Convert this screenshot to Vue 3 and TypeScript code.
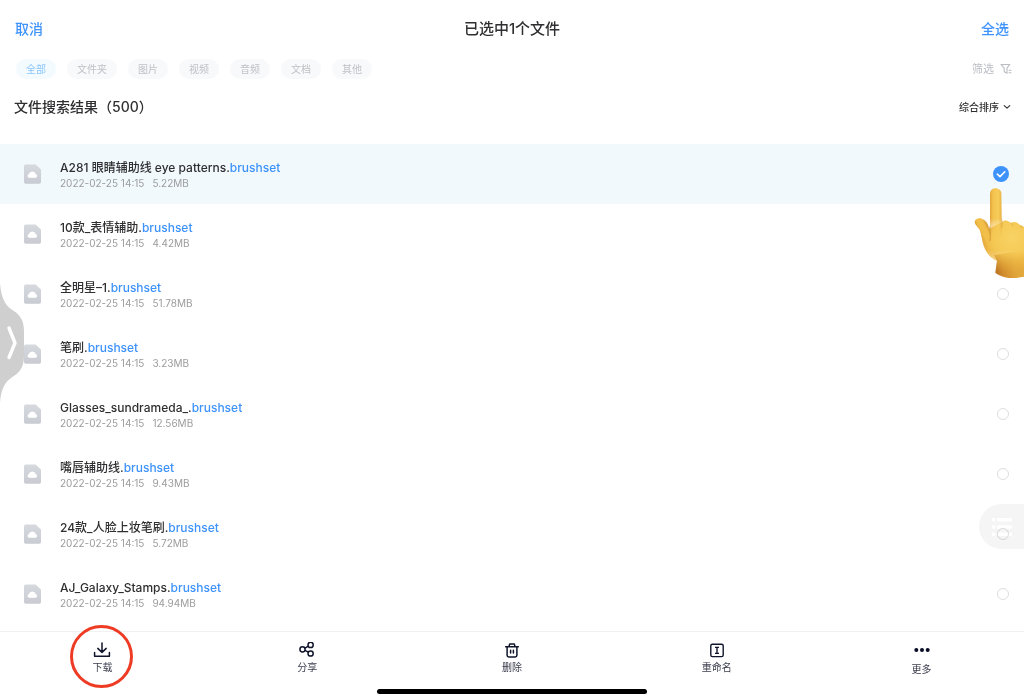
<script setup lang="ts">
import { ref } from 'vue'

interface FileItem {
  id: number
  name: string
  time: string
  size: string
  selected: boolean
}

const filters = ['全部', '文件夹', '图片', '视频', '音频', '文档', '其他']
const activeFilter = ref('全部')

const time = '2022-02-25 14:15'
const files = ref<FileItem[]>([
  { id: 1, name: 'A281 眼睛辅助线 eye patterns.', time, size: '5.22MB', selected: true },
  { id: 2, name: '10款_表情辅助.', time, size: '4.42MB', selected: false },
  { id: 3, name: '全明星–1.', time, size: '51.78MB', selected: false },
  { id: 4, name: '笔刷.', time, size: '3.23MB', selected: false },
  { id: 5, name: 'Glasses_sundrameda_.', time, size: '12.56MB', selected: false },
  { id: 6, name: '嘴唇辅助线.', time, size: '9.43MB', selected: false },
  { id: 7, name: '24款_人脸上妆笔刷.', time, size: '5.72MB', selected: false },
  { id: 8, name: 'AJ_Galaxy_Stamps.', time, size: '94.94MB', selected: false },
])
</script>

<template>
  <div class="page">
    <header class="topbar">
      <button type="button" class="link start">取消</button>
      <h1>已选中1个文件</h1>
      <button type="button" class="link end">全选</button>
    </header>

    <nav class="filters">
      <button
        v-for="f in filters"
        :key="f"
        type="button"
        class="chip"
        :class="{ active: f === activeFilter }"
        @click="activeFilter = f"
      >{{ f }}</button>
      <button type="button" class="screen">
        筛选
        <svg width="12" height="12" viewBox="0 0 12 12" fill="none" stroke="currentColor" stroke-width="1.1" stroke-linejoin="round" stroke-linecap="round">
          <path d="M1 1.5H9.8L7 5.2V10.2L4.2 8.8V5.2Z" />
          <path d="M9 7.2H11M9 9.8H11" />
        </svg>
      </button>
    </nav>

    <div class="heading">
      <h2>文件搜索结果（500）</h2>
      <button type="button" class="sort">
        综合排序
        <svg width="8" height="6" viewBox="0 0 8 6" fill="none" stroke="currentColor" stroke-width="1.1" stroke-linecap="round" stroke-linejoin="round">
          <path d="M1.2 1.6L4 4.2L6.8 1.6" />
        </svg>
      </button>
    </div>

    <ul class="list">
      <li v-for="f in files" :key="f.id">
        <label class="row" :class="{ selected: f.selected }">
          <svg class="file" width="17" height="20" viewBox="0 0 17 20">
            <defs>
              <linearGradient :id="'file-' + f.id" x1="0" y1="0" x2="0" y2="1">
                <stop offset="0" stop-color="#d6d9de" />
                <stop offset="1" stop-color="#c8cbd2" />
              </linearGradient>
            </defs>
            <path d="M2 .5H11.6L17 5.6V18A1.7 1.7 0 0 1 15.3 19.7H1.7A1.7 1.7 0 0 1 0 18V2.3A1.8 1.8 0 0 1 1.8 .5Z" :fill="'url(#file-' + f.id + ')'" />
            <path d="M5.2 13.8A1.9 1.9 0 0 1 4.9 10.1A3.5 3.5 0 0 1 11.7 10.1A1.9 1.9 0 0 1 11.6 13.8Z" fill="#fff" />
          </svg>
          <span class="info">
            <span class="name">{{ f.name }}<em>brushset</em></span>
            <span class="meta"><span>{{ f.time }}</span><span>{{ f.size }}</span></span>
          </span>
          <span class="pick">
            <input v-model="f.selected" type="checkbox" />
            <svg v-if="f.selected" class="tick" width="16" height="16" viewBox="0 0 16 16" fill="none" stroke="#fff" stroke-width="1.6" stroke-linecap="round" stroke-linejoin="round">
              <path d="M4.3 8.2L7 10.6L11.8 5.8" />
            </svg>
          </span>
        </label>
      </li>
    </ul>

    <footer class="actions">
      <button type="button">
        <svg width="18" height="16" viewBox="0 0 18 16" fill="none" stroke="#10142b" stroke-width="1.5" stroke-linecap="round" stroke-linejoin="round">
          <path d="M9 .9V10.2M4.8 6.4L9 10.4L13.2 6.4" />
          <path d="M1.6 10.4V14.3H16.4V10.4" />
        </svg>
        下载
        <i class="ring"></i>
      </button>
      <button type="button">
        <svg width="16" height="16" viewBox="0 0 16 16" fill="none" stroke="#10142b" stroke-width="1.5">
          <circle cx="3.5" cy="7.3" r="2.6" />
          <circle cx="11.6" cy="2.9" r="2.6" />
          <circle cx="11.6" cy="11.5" r="2.6" />
          <path d="M6 6.2L9.3 4.2M6 8.3L9.3 10.2" />
        </svg>
        分享
      </button>
      <button type="button">
        <svg width="16" height="16" viewBox="0 0 16 16" fill="none" stroke="#10142b" stroke-width="1.5" stroke-linecap="round" stroke-linejoin="round">
          <path d="M1.7 4.7H14.3M5 4.4L5.7 2H10.3L11 4.4" />
          <path d="M3.1 4.8V13.2A1.7 1.7 0 0 0 4.8 14.9H11.2A1.7 1.7 0 0 0 12.9 13.2V4.8" />
          <path d="M6.6 8.3V11M9.4 8.3V11" />
        </svg>
        删除
      </button>
      <button type="button">
        <svg width="16" height="16" viewBox="0 0 16 16" fill="none" stroke="#10142b" stroke-width="1.4" stroke-linejoin="round">
          <rect x="1.8" y="2.2" width="12.4" height="12.4" rx="1.6" />
          <path d="M6 5.4H10M6 11.4H10M8 5.4V11.4" />
        </svg>
        重命名
      </button>
      <button type="button" class="more">
        <svg width="16" height="16" viewBox="0 0 16 16" fill="#080c24">
          <circle cx="2.3" cy="8" r="2" />
          <circle cx="8" cy="8" r="2" />
          <circle cx="13.7" cy="8" r="2" />
        </svg>
        更多
      </button>
      <i class="home"></i>
    </footer>

    <button type="button" class="drawer" aria-label="展开">
      <svg width="24" height="120" viewBox="0 0 24 120">
        <path d="M0 0C1 14 5 22 11 26C19 31 24 36 24 48V73C24 85 19 90 11 95C5 99 1 106 0 120Z" fill="#cfcfcf" />
        <path d="M9 45L15 60L9 74.5" fill="none" stroke="#fff" stroke-width="3.4" stroke-linecap="round" stroke-linejoin="round" />
      </svg>
    </button>

    <button type="button" class="float" aria-label="列表">
      <svg width="20" height="20" viewBox="0 0 20 20" fill="#fff">
        <rect x="0" y="1" width="3.4" height="3.4" rx="1" /><rect x="5" y="1" width="15" height="3.4" rx="1" />
        <rect x="0" y="8.3" width="3.4" height="3.4" rx="1" /><rect x="5" y="8.3" width="15" height="3.4" rx="1" />
        <rect x="0" y="15.6" width="3.4" height="3.4" rx="1" /><rect x="5" y="15.6" width="15" height="3.4" rx="1" />
      </svg>
    </button>

    <svg class="hand" width="50" height="91" viewBox="90 114 150 273">
      <defs>
        <radialGradient id="palm" gradientUnits="userSpaceOnUse" cx="205" cy="262" r="130">
          <stop offset="0" stop-color="#f8d364" />
          <stop offset=".45" stop-color="#f5c854" />
          <stop offset=".7" stop-color="#ebb441" />
          <stop offset="1" stop-color="#cd862a" />
        </radialGradient>
        <linearGradient id="index" gradientUnits="userSpaceOnUse" x1="138" y1="0" x2="174" y2="0">
          <stop offset="0" stop-color="#e2a538" />
          <stop offset=".25" stop-color="#f4c24e" />
          <stop offset=".7" stop-color="#f7cc58" />
          <stop offset="1" stop-color="#e6ae40" />
        </linearGradient>
        <linearGradient id="fade" gradientUnits="userSpaceOnUse" x1="0" y1="205" x2="0" y2="262">
          <stop offset="0" stop-color="#fff" />
          <stop offset="1" stop-color="#000" />
        </linearGradient>
        <mask id="index-mask" maskUnits="userSpaceOnUse" x="90" y="110" width="150" height="280">
          <rect x="90" y="110" width="150" height="280" fill="url(#fade)" />
        </mask>
        <linearGradient id="thumb" gradientUnits="userSpaceOnUse" x1="104" y1="262" x2="142" y2="244">
          <stop offset="0" stop-color="#d38d2b" />
          <stop offset=".4" stop-color="#f2bf49" />
          <stop offset=".75" stop-color="#f1be49" />
          <stop offset="1" stop-color="#d4932f" />
        </linearGradient>
        <linearGradient id="thumb-fade" gradientUnits="userSpaceOnUse" x1="0" y1="250" x2="0" y2="305">
          <stop offset="0" stop-color="#fff" />
          <stop offset="1" stop-color="#000" />
        </linearGradient>
        <mask id="thumb-mask" maskUnits="userSpaceOnUse" x="80" y="190" width="160" height="160">
          <rect x="80" y="190" width="160" height="160" fill="url(#thumb-fade)" />
        </mask>
        <linearGradient id="wrist" gradientUnits="userSpaceOnUse" x1="152" y1="0" x2="240" y2="0">
          <stop offset="0" stop-color="#b0661f" />
          <stop offset=".3" stop-color="#d08a2c" />
          <stop offset=".7" stop-color="#e2a63a" />
          <stop offset="1" stop-color="#e6ad3f" />
        </linearGradient>
        <linearGradient id="palm-fade" gradientUnits="userSpaceOnUse" x1="0" y1="300" x2="0" y2="372">
          <stop offset="0" stop-color="#fff" />
          <stop offset="1" stop-color="#222" />
        </linearGradient>
        <mask id="palm-mask" maskUnits="userSpaceOnUse" x="80" y="190" width="170" height="200">
          <rect x="80" y="190" width="170" height="200" fill="url(#palm-fade)" />
        </mask>
      </defs>
      <path d="M150 315L159 333L154 368C172 382 196 385 212 384C224 383 234 382 242 380V300Z" fill="url(#wrist)" />
      <path mask="url(#palm-mask)" d="M138 235L173 217C180 209 193 210 200 219C209 213 222 216 228 226C234 226 238 229 242 233V380C234 382 224 383 212 384C196 385 172 382 154 368L159 333C141 326 129 311 122 294C116 280 114 262 110 246Z" fill="url(#palm)" />
      <path mask="url(#thumb-mask)" d="M92 215C93 207 103 203 113 206C127 210 136 226 138 250V310H128C114 290 115 256 106 238C101 229 92 224 92 215Z" fill="url(#thumb)" />
      <path mask="url(#index-mask)" d="M138 270V130C139 120 146 115 154 115C163 115 171 120 172 130L174 270Z" fill="url(#index)" />
      <path d="M137 230C139 246 140 260 138 272" fill="none" stroke="#b97822" stroke-width="3" opacity=".55" stroke-linecap="round" />
      <path d="M200 219C204 221 206 224 207 228M228 226C231 228 233 231 233 234M173 207C175 216 175 226 174 232" fill="none" stroke="#d39532" stroke-width="2" opacity=".7" stroke-linecap="round" />
    </svg>
  </div>
</template>

<style>
body {
  margin: 0;
  background: #fff;
}
</style>

<style scoped>
.page {
  position: relative;
  display: flex;
  flex-direction: column;
  min-height: 100vh;
  overflow: hidden;
  background: #fff;
  color: #2f2f31;
  font-family: Inter, "Noto Sans CJK SC", sans-serif;
}
button {
  margin: 0;
  padding: 0;
  border: 0;
  background: none;
  color: inherit;
  font: inherit;
  cursor: pointer;
}
h1, h2 {
  margin: 0;
  font-weight: 500;
  font-size: 14px;
  line-height: 20px;
}
h1 {
  font-size: 15px;
}
svg {
  display: block;
  flex: none;
}
.topbar {
  display: grid;
  grid-template-columns: 1fr auto 1fr;
  align-items: center;
  height: 58px;
  padding: 0 15px;
}
.link {
  color: #3e93fb;
  font-size: 14px;
  font-weight: 500;
  line-height: 20px;
}
.start {
  justify-self: start;
}
.end {
  justify-self: end;
}
.filters {
  display: flex;
  align-items: center;
  gap: 11px;
  height: 22px;
  padding: 0 12px 0 16px;
  font-size: 10px;
  line-height: 20px;
}
.chip {
  padding: 0 10px;
  border-radius: 10px;
  background: #f8f9fb;
  color: #bfc0c6;
}
.chip.active {
  background: #f3fbff;
  color: #8ac6fb;
}
.screen {
  display: flex;
  align-items: center;
  gap: 6px;
  margin-left: auto;
  color: #bcbdc5;
  font-size: 11px;
}
.heading {
  display: flex;
  align-items: center;
  justify-content: space-between;
  height: 54px;
  padding: 0 13px 10px 14px;
}
.sort {
  display: flex;
  align-items: center;
  gap: 4px;
  font-size: 10px;
  font-weight: 500;
  line-height: 20px;
}
.list {
  flex: 1;
  margin: 0;
  padding: 0 0 7px;
  list-style: none;
}
.row {
  display: flex;
  align-items: center;
  box-sizing: border-box;
  height: 60px;
  padding: 0 15px 0 24px;
}
.row.selected {
  background: #f1f9fd;
}
.info {
  display: flex;
  flex: 1;
  flex-direction: column;
  min-width: 0;
  margin-left: 19px;
  padding-top: 2px;
}
.name {
  font-size: 12px;
  font-weight: 500;
  line-height: 16px;
}
.name em {
  color: #3e93fb;
  font-style: normal;
}
.meta {
  display: flex;
  gap: 8px;
  color: #9c9c9e;
  font-size: 10px;
  line-height: 14px;
}
.pick {
  position: relative;
  display: flex;
}
.pick input {
  appearance: none;
  box-sizing: border-box;
  width: 12px;
  height: 12px;
  margin: 0;
  border: 1px solid #dedede;
  border-radius: 50%;
}
.pick input:checked {
  width: 16px;
  height: 16px;
  border: 0;
  background: #3e93fb;
}
.tick {
  position: absolute;
  inset: 0;
  pointer-events: none;
}
.actions {
  position: relative;
  display: grid;
  grid-template-columns: repeat(5, 1fr);
  align-items: start;
  box-sizing: border-box;
  height: 69px;
  padding-top: 10px;
  border-top: 1px solid #f1f1f2;
}
.actions button {
  position: relative;
  display: flex;
  flex-direction: column;
  align-items: center;
  gap: 1px;
  color: #3a3c4c;
  font-size: 10px;
  line-height: 16px;
}
.actions .more {
  gap: 3px;
}
.ring {
  position: absolute;
  top: -17px;
  left: 50%;
  box-sizing: border-box;
  width: 63px;
  height: 63px;
  margin-left: -32px;
  border: 3px solid #ee3b24;
  border-radius: 50%;
}
.home {
  position: absolute;
  bottom: 6px;
  left: 50%;
  width: 270px;
  height: 5px;
  margin-left: -135px;
  border-radius: 3px;
  background: #000;
}
.drawer {
  position: absolute;
  top: 283px;
  left: 0;
}
.float {
  position: absolute;
  top: 504px;
  right: 0;
  width: 45px;
  height: 45px;
  padding-left: 13px;
  border-radius: 23px 0 0 23px;
  background: #f5f5f5;
  mix-blend-mode: multiply;
}
.hand {
  position: absolute;
  top: 188px;
  right: 0;
}
</style>
